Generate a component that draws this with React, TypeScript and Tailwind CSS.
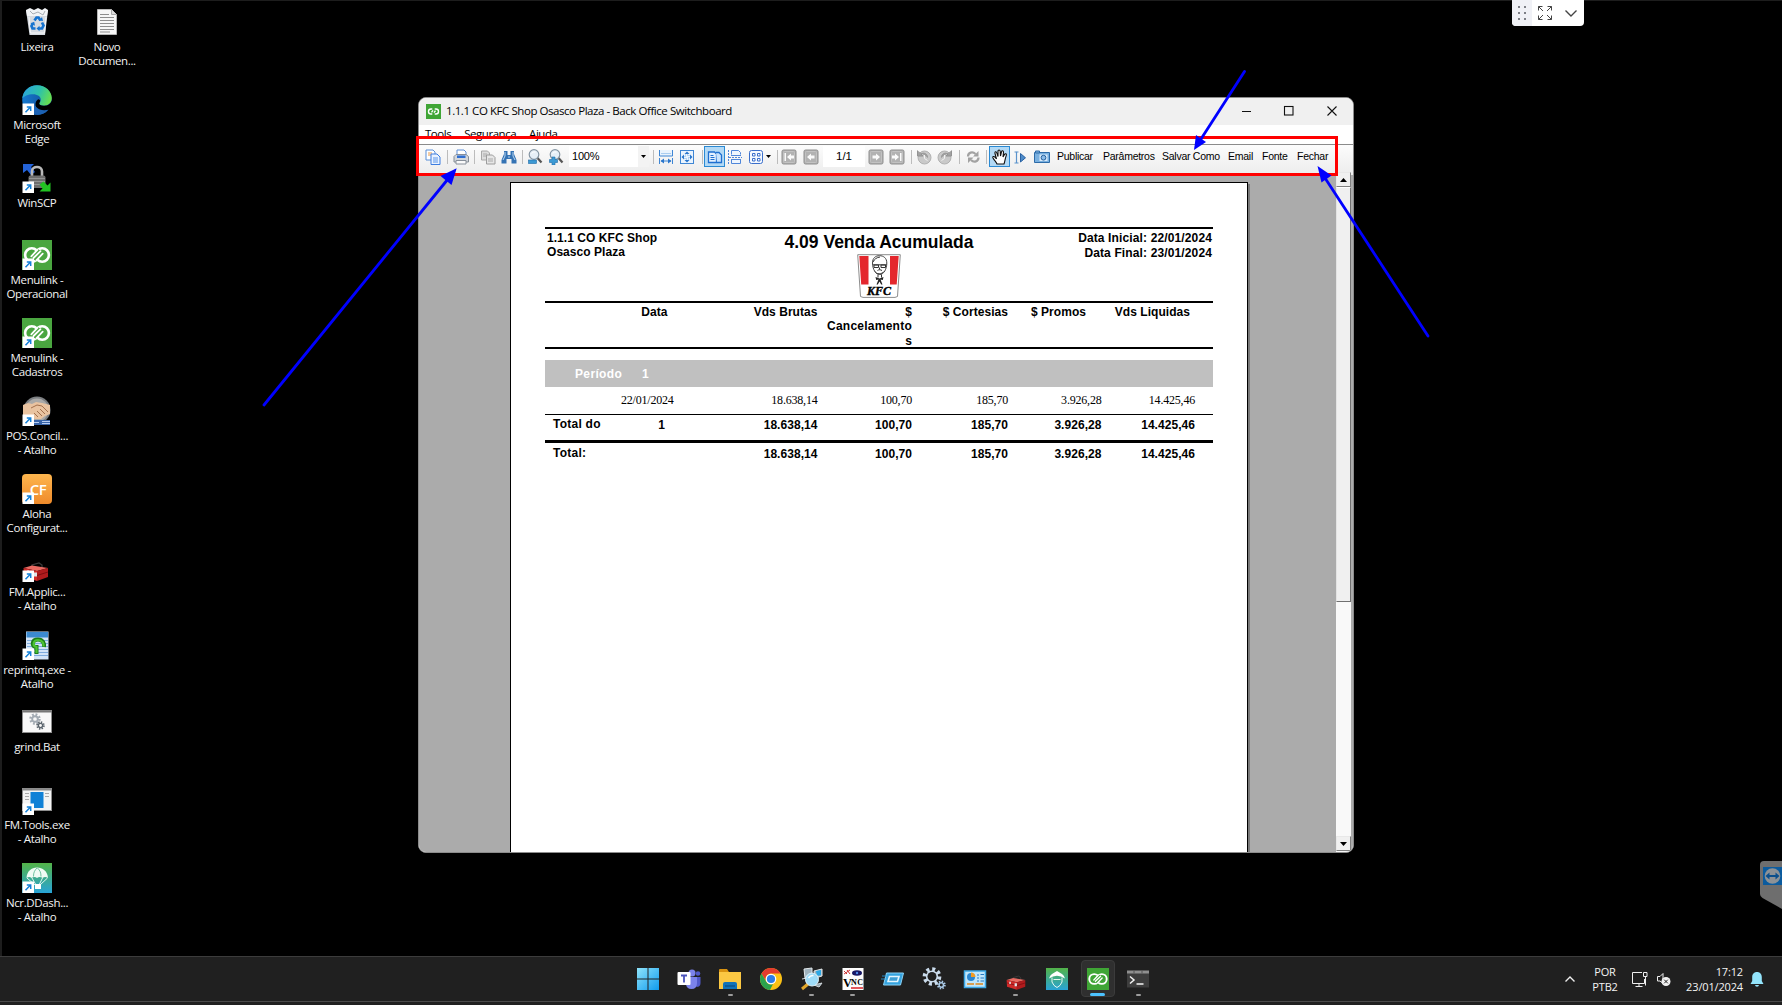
import React from "react";

function ShortcutBadge() {
  return (
    <g>
      <rect x="0.5" y="18.5" width="11.5" height="11.5" fill="#fff" />
      <path d="M3.5 27.3 8.3 22.2M4.8 21.9h3.9v4" fill="none" stroke="#1380d8" strokeWidth="1.5" />
    </g>
  );
}

function LinkRings({ ground }: { ground: string }) {
  return (
    <g fill="none" strokeLinecap="round">
      <circle cx="9.800" cy="15" r="6.700" stroke="#fff" strokeWidth="2.600" />
      <circle cx="20.200" cy="15" r="6.700" stroke="#fff" strokeWidth="2.600" />
      <path d="M11.500 19 18.500 11" stroke={ground} strokeWidth="7" strokeLinecap="butt" />
      <path d="M9.300 16.300 15.600 9.600M11.500 18 18.500 11.200M14.300 20.300 20.700 13.600" stroke="#fff" strokeWidth="1.800" />
    </g>
  );
}

function TrashIcon() {
  return (
    <svg width="30" height="30" viewBox="0 0 30 30">
      <path d="M4 3h22l-3 25H7.500z" fill="#d5dae0" />
      <path d="M4 3 8 1l4 2 4-2 4 2 3-2 3 2-1 6H5z" fill="#f2f4f6" />
      <path d="M8 4l3 3 5-2 5 3 2-4" stroke="#a8aeb5" fill="none" />
      <path d="m7 10 1.500 16h14L24 10" stroke="#f6f7f8" fill="none" />
      <g fill="none" stroke="#1673cf" strokeWidth="2.700">
        <path d="m12.500 13.500 2-3h2l2 3M20 15.500l1.500 3-1.500 3h-3M13.500 21.500h-3L9.500 19l1.500-3" />
      </g>
      <path d="m17 13.500 4 .5-1-4zM17.500 18.800v5.400l-3-2.700zM8.500 16.500l3.700-1.800.8 4z" fill="#1673cf" />
    </svg>
  );
}
function DocIcon() {
  return (
    <svg width="30" height="30" viewBox="0 0 30 30">
      <path d="M5.500 2.500h14l5 5v20h-19z" fill="#f6f6f6" stroke="#b5b5b5" />
      <path d="M19.500 2.500v5h5" fill="#ddd" stroke="#aaa" />
      <path d="M8 7.500h9M8 10.500h14M8 13.500h14M8 16.500h14M8 19.500h14M8 22.500h14M8 25h10" stroke="#8d8d8d" />
    </svg>
  );
}
function EdgeIcon() {
  return (
    <svg width="30" height="30" viewBox="0 0 30 30">
      <defs>
        <linearGradient id="eg1" x1="0" x2="1" y1="0.300" y2="0.600">
          <stop offset="0" stopColor="#2aa4dc" />
          <stop offset="0.550" stopColor="#2fc2a8" />
          <stop offset="1" stopColor="#6ae04b" />
        </linearGradient>
        <linearGradient id="eg2" x1="0" x2="1">
          <stop offset="0" stopColor="#1579cf" />
          <stop offset="1" stopColor="#134b94" />
        </linearGradient>
      </defs>
      <circle cx="15" cy="15" r="14.800" fill="url(#eg2)" />
      <path d="M.3 13.500C1 5.500 7.500.2 15 .2c8.500 0 14.800 6 14.800 12.800 0 5-3.800 7.700-7.800 7.700-3.500 0-4.800-1.200-4.800-2.200 0-.8 1.600-1.500 1.600-4 0-3-3.300-5.300-7.800-5.300C6 9.200 1.800 11.200.3 13.500z" fill="url(#eg1)" />
      <path d="M17.200 18.500c0 1 1.300 2.200 4.800 2.200 4 0 6.500-2 8-5v9l-4 2c-6 1.500-12-2-12.500-6.500-.3-3 1-5 2.700-6 1.300 0 2.400 1 1.900 2z" fill="#000" />
      <path d="M12 13.500c-1.500 7 4 13.500 14.500 11.200C22 30 15 31.500 9 28z" fill="#1c62b4" />
      <ShortcutBadge />
    </svg>
  );
}
function WinScpIcon() {
  return (
    <svg width="30" height="30" viewBox="0 0 30 30">
      <path d="M1 1h11L9 4l4 5-4 3-4-5-4 3z" fill="#2463d8" />
      <path d="M10 14V8.500c0-6 10-6 10 0V14" fill="none" stroke="#b9b9b9" strokeWidth="2.600" />
      <rect x="6.500" y="12.500" width="17" height="12.500" rx="2" fill="#6e6e6e" />
      <path d="M7 15.500h16M7 18.500h16M7 21.500h16" stroke="#949494" />
      <path d="M28.500 28.500h-11l3-3-3-4 4-3 4 4 3-3z" fill="#22c322" />
      <ShortcutBadge />
    </svg>
  );
}
function MenulinkIcon() {
  return (
    <svg width="30" height="30" viewBox="0 0 30 30">
      <rect width="30" height="30" fill="#4aa640" />
      <LinkRings ground="#4aa640" />
      <ShortcutBadge />
    </svg>
  );
}
function HandshakeIcon() {
  return (
    <svg width="30" height="30" viewBox="0 0 30 30">
      <circle cx="15" cy="14" r="13.500" fill="#7c7f82" />
      <circle cx="15" cy="14" r="11.500" fill="#a9a9a8" />
      <path d="M1 9c4-2 6-2 9-1l4-2 6 1 8 2v9l-5 2-4 3h-6l-6-3-6-1z" fill="#e9c3a0" />
      <path d="M9 12l6-3 5 1 6 6M12 17l4 4M15 15l5 5M18 13l5 5" stroke="#a4714d" fill="none" />
      <path d="M12 24h16v5H12z" fill="#3864a8" />
      <path d="M12 26.500h5M20 25.500h8M20 27.500h8" stroke="#b7cdf0" />
      <ShortcutBadge />
    </svg>
  );
}
function CfIcon() {
  return (
    <span className="relative block h-[30px] w-[30px] rounded-sm bg-gradient-to-b from-[#fdb64e] to-[#ef8a2a]">
      <span className="block pl-[2px] pt-[5px] text-center font-['Open_Sans',sans-serif] text-[15px] leading-[20px] font-semibold tracking-[-0.500px] text-white">CF</span>
      <svg className="absolute inset-0" width="30" height="30" viewBox="0 0 30 30">
        <ShortcutBadge />
      </svg>
    </span>
  );
}
function ToolboxShape() {
  return (
    <g>
      <path d="M10 13v-3l7-2 3 2v3" fill="none" stroke="#3a3a3a" strokeWidth="1.300" />
      <path d="M1.500 13 10 10.500 26 13l-11 3z" fill="#e86a62" />
      <path d="M1.500 13 15 16v10L2 22z" fill="#d02a29" />
      <path d="M15 16l11-3v9l-11 4z" fill="#b01b1d" />
      <path d="M2 17l13 3.500L26 17" stroke="#7d0d10" fill="none" />
      <path d="M12 17.500h3v4h-3zM5 15.500h2v3H5z" fill="#dfe6ea" />
    </g>
  );
}
function ToolboxIcon() {
  return (
    <svg width="30" height="30" viewBox="0 0 30 30">
      <g transform="translate(0 3)">
        <ToolboxShape />
      </g>
      <ShortcutBadge />
    </svg>
  );
}
function ReprintIcon() {
  return (
    <svg width="30" height="30" viewBox="0 0 30 30">
      <rect x="4" y="1.500" width="22.500" height="28" fill="#d3e4f7" />
      <rect x="4.500" y="2" width="21.500" height="5.500" fill="#3c8ad0" />
      <path d="M5 10.500h21M5 13.500h21M5 16.500h21M5 19.500h21M5 22.500h21M5 25.500h21" stroke="#7fabdd" />
      <path d="M14.500 24v-7C9 17 9.500 9.500 16 9.500c5 0 6.500 4 6 7.500" fill="none" stroke="#1d7d17" strokeWidth="4" />
      <path d="M14.500 23v-6C10 16 11 10 16 10c4.500 0 6 3.500 5.500 6.500" fill="none" stroke="#4cc234" strokeWidth="2.200" />
      <ShortcutBadge />
    </svg>
  );
}
function Gear({ cx, cy, r, color, hole }: { cx: number; cy: number; r: number; color: string; hole: string }) {
  return (
    <g>
      <circle cx={cx} cy={cy} r={r} fill="none" stroke={color} strokeWidth={r * 0.6} strokeDasharray={`${r * 0.4} ${r * 0.385}`} />
      <circle cx={cx} cy={cy} r={r * 0.85} fill={color} />
      <circle cx={cx} cy={cy} r={r * 0.42} fill={hole} />
    </g>
  );
}
function BatIcon() {
  return (
    <svg width="30" height="30" viewBox="0 0 30 30">
      <rect x="0.500" y="3.500" width="29" height="22" fill="#f8f8f8" stroke="#8e8e8e" />
      <path d="M0 4.500h30" stroke="#777" strokeWidth="2" />
      <Gear cx={13} cy={12} r={4.4} color="#a3abb3" hole="#f8f8f8" />
      <Gear cx={18.5} cy={18.5} r={3.3} color="#5b656d" hole="#f8f8f8" />
    </svg>
  );
}
function ExeIcon() {
  return (
    <svg width="30" height="30" viewBox="0 0 30 30">
      <rect x="0.500" y="3.500" width="29" height="22" fill="#f4f4f4" stroke="#8e8e8e" />
      <path d="M0 4.500h30" stroke="#888" strokeWidth="2" />
      <path d="M3 8.500h4M3 11.500h4M3 14.500h4M23 8.500h4M23 11.500h4" stroke="#aaa" />
      <rect x="8.500" y="7" width="13" height="16" fill="#1181d6" />
      <ShortcutBadge />
    </svg>
  );
}
function ParachuteIcon() {
  return (
    <svg width="30" height="30" viewBox="0 0 30 30">
      <defs>
        <linearGradient id="pg" x1="0" x2="0" y1="0" y2="1">
          <stop offset="0" stopColor="#53b348" />
          <stop offset="1" stopColor="#28a3d6" />
        </linearGradient>
      </defs>
      <rect width="30" height="30" fill="url(#pg)" />
      <path d="M4.500 15C5 8 9.500 4.500 15 4.500S25.500 8 26 15c-2-1.500-4-1.500-5.300 0-2-1.500-4-1.500-5.700 0-1.500-1.500-3.500-1.500-5.500 0-1.300-1.500-3-1.500-5 0z" fill="#f0fbf4" />
      <path d="M5 15l8 7M25.500 15 18 22M10 15l4 7M20.500 15 17 22" stroke="#e4f6ee" fill="none" />
      <path d="M11.500 13.500c0-4 1-6 3.500-8.500M19 13.500c0-4-1-6-3.500-8.500" stroke="#4db48a" fill="none" strokeWidth=".8" />
      <rect x="13" y="21" width="6" height="5" fill="#fff" />
      <ShortcutBadge />
    </svg>
  );
}

function DesktopItem({ icon, lines }: { icon: React.ReactNode; lines: string[] }) {
  return (
    <div className="flex h-[77.820px] w-[70px] flex-col items-center">
      <div className="h-[30px] w-[30px]">{icon}</div>
      <div className="mt-[3px] whitespace-nowrap text-center text-[11.500px] leading-[14px] tracking-[-0.360px] text-[#f2f2f2]">
        {lines.map((l) => (
          <div key={l} className="flex justify-center">{l}</div>
        ))}
      </div>
    </div>
  );
}

/* ---------- report viewer toolbar ---------- */

function Cell({ children, active = false }: { children?: React.ReactNode; active?: boolean }) {
  return (
    <div
      className={
        active
          ? "flex h-[21px] items-center justify-center border border-[#2a8ad4] bg-[#b3d9f5]"
          : "flex h-[21px] items-center justify-center"
      }
    >
      {children}
    </div>
  );
}
function Sep() {
  return (
    <div className="flex h-[21px] items-center justify-center">
      <div className="h-[14px] w-px shrink-0 bg-[#bcbcbc]" />
    </div>
  );
}
function Ico({ children }: { children: React.ReactNode }) {
  return (
    <svg className="shrink-0" width="16" height="16" viewBox="0 0 16 16" fill="none">
      {children}
    </svg>
  );
}
function NavIcon({ d }: { d: string }) {
  return (
    <Ico>
      <rect x="1" y="1" width="14" height="14" rx="1.500" fill="#b2b2b2" stroke="#8f8f8f" />
      <rect x="2.500" y="2.500" width="11" height="11" rx="1" stroke="#c2c2c2" />
      <path d={d} fill="#fafafa" />
    </Ico>
  );
}
function Lens({ plus = false }: { plus?: boolean }) {
  return (
    <Ico>
      <path d="m10.500 9 4 4.500" stroke="#555" strokeWidth="2.200" />
      <circle cx="7" cy="5.500" r="4.800" fill="#e6eff7" stroke="#8696a4" strokeWidth="1.200" />
      <path d="M4.500 4.500q1.500-2 4-1.500" stroke="#fff" />
      {plus ? (
        <path d="M4 8h3v2.500h2.500v3H7V16H4v-2.500H1.500v-3H4z" fill="#3d9ad4" stroke="#1f6ca8" strokeWidth=".6" />
      ) : (
        <rect x="1.500" y="11" width="8" height="3.500" fill="#3d9ad4" stroke="#1f6ca8" strokeWidth=".6" />
      )}
    </Ico>
  );
}

function Toolbar() {
  return (
    <div className="grid h-[31px] shrink-0 grid-cols-[22px_7px_19px_9px_17px_25px_3px_22px_20px_3px_80px_9px_16px_26px_4px_21px_20px_21px_5px_12px_12px_3px_25px_42px_22px_20px_9px_15px_28px_1px_25px_3px_1px_21px_20px_23px_4px_46px_59px_66px_34px_35px_1fr] border-t border-[#8b8b8b] bg-gradient-to-b from-[#fcfcfc] to-[#ececec] pl-[3px] pt-[1px] font-['Liberation_Sans',sans-serif] text-[11px] text-black">
      <Cell>
        <Ico>
          <path d="M1 1h7l2 2v8H1z" fill="#fff" stroke="#5a8fd8" />
          <path d="M3 4h4M3 6h4" stroke="#e89a4a" />
          <path d="M6 5h6l3 3v7.500H6z" fill="#eaf3ff" stroke="#3d7de0" />
          <path d="M8 9h5M8 11h5M8 13h5" stroke="#5a95ea" />
        </Ico>
      </Cell>
      <Sep />
      <Cell>
        <Ico>
          <path d="M4 6V1h7l2 2v3" fill="#fff" stroke="#5f8fd6" />
          <path d="M1 7.500 3 5.500h10l2.500 2V13H1z" fill="#d3d7dc" stroke="#868e97" />
          <path d="M4 6.500h8.500v2.500H4z" fill="#2f6fd1" />
          <path d="M3 11.500h10V15H3z" fill="#fafafa" stroke="#88909a" />
        </Ico>
      </Cell>
      <Sep />
      <Cell>
        <Ico>
          <path d="M1.500 2h6l2 2v7h-8z" fill="#ddd" stroke="#a8a8a8" />
          <path d="M6.500 6h6l2.500 2.500V15H6.500z" fill="#e6e6e6" stroke="#9c9c9c" />
          <path d="M3 5h4M3 7h3M8 10h5M8 12h5" stroke="#aaa" />
        </Ico>
      </Cell>
      <Cell>
        <Ico>
          <path d="M3 2h3.500v4h3V2H13v3l2.500 6v3.500h-5V10h-5v4.500h-5V11L3 5z" fill="#3573b4" />
          <path d="M4 3v4l-2 4M12 3v4l2 4M7 8h2" stroke="#b9d6f0" />
        </Ico>
      </Cell>
      <Sep />
      <Cell><Lens /></Cell>
      <Cell><Lens plus /></Cell>
      <div />
      <div className="flex h-[21px] items-center justify-between bg-white pl-[3px]">
        <span className="tracking-[-0.200px]">100%</span>
        <span className="flex h-full w-[11px] items-center justify-center bg-[#f3f3f3]">
          <svg width="5" height="3" viewBox="0 0 5 3"><path d="M0 0h5L2.500 3z" fill="#000" /></svg>
        </span>
      </div>
      <Sep />
      <Cell>
        <Ico>
          <path d="M1.500 1v6h13V1" stroke="#3f86d4" fill="#e9f3fd" />
          <path d="M1.500 9v6M14.500 9v6M3 12h10" stroke="#3f86d4" />
          <path d="m6 9.500-3.500 2.500L6 14.500zM10 9.500l3.500 2.500-3.500 2.500z" fill="#2a76cc" />
          <path d="M3 4.500h10" stroke="#a9cdf0" />
        </Ico>
      </Cell>
      <Cell>
        <Ico>
          <rect x="1.500" y="1.500" width="13" height="13" fill="#eaf4fe" stroke="#3f86d4" />
          <path d="m8 2.500 2.500 2.500h-5zM8 13.500l2.500-2.500h-5zM2.500 8 5 5.500v5zM13.500 8 11 5.500v5z" fill="#2a76cc" />
          <path d="M6 6h4v4H6z" stroke="#7fb2e6" strokeDasharray="1 1" />
        </Ico>
      </Cell>
      <Sep />
      <Cell active>
        <Ico>
          <path d="M1.500 3h6l2 2v8.500h-8z" fill="#e4f1ff" stroke="#1f6fd0" strokeWidth="1.300" />
          <path d="M9 3.500h3l2.500 2.500v7.500H10" fill="#cbe4fd" stroke="#1f6fd0" strokeWidth="1.300" />
          <path d="M3.500 6.500h3M3.500 8.500h4M3.500 10.500h4" stroke="#1f6fd0" />
        </Ico>
      </Cell>
      <Cell>
        <Ico>
          <path d="M4.500 5.500v-4h7l2 2v2M4.500 11v3.500h9V11" fill="#edf5ff" stroke="#4f86da" />
          <path d="M1.500 1v14" stroke="#4f86da" strokeDasharray="2 1" />
          <path d="M2 8.500h13" stroke="#4f86da" strokeDasharray="2 1" />
          <path d="M4 6.500h10M4 10.500h10" stroke="#4f86da" />
        </Ico>
      </Cell>
      <Cell>
        <Ico>
          <rect x="1.500" y="1.500" width="13" height="13" rx="2" fill="#f3f8ff" stroke="#3b6fcb" />
          <path d="M4.500 4.500h2.500v2.500H4.500zM9.500 4.500H12v2.500H9.500zM4.500 9.500h2.500V12H4.500zM9.500 9.500H12V12H9.500z" fill="#fff" stroke="#3b6fcb" />
        </Ico>
      </Cell>
      <Cell>
        <svg className="shrink-0" width="5" height="3" viewBox="0 0 5 3"><path d="M0 0h5L2.500 3z" fill="#000" /></svg>
      </Cell>
      <Sep />
      <Cell><NavIcon d="M3.500 4h1.500v8H3.500zM6 8l4-3.500v2h3v3h-3v2z" /></Cell>
      <div />
      <Cell><NavIcon d="M4 8 8 4.500v2h3.500v3H8v2z" /></Cell>
      <div className="flex h-[21px] items-center justify-center bg-white text-[11.500px]">1/1</div>
      <Cell><NavIcon d="M12 8 8 4.500v2H4.500v3H8v2z" /></Cell>
      <Cell><NavIcon d="M12.500 4H11v8h1.500zM10 8 6 4.500v2H3v3h3v2z" /></Cell>
      <Sep />
      <Cell>
        <Ico>
          <circle cx="8.500" cy="8.500" r="6.500" fill="#c9c9c9" stroke="#b0b0b0" />
          <path d="M1.500 1.500v5.500H7L5 5C8 3 11.500 5 11.500 8.500" fill="#a2a2a2" stroke="#929292" />
          <path d="M8.500 6v3.500l3 2" stroke="#f2f2f2" />
        </Ico>
      </Cell>
      <Cell>
        <Ico>
          <circle cx="7.500" cy="8.500" r="6.500" fill="#c9c9c9" stroke="#b0b0b0" />
          <path d="M14.500 1.500v5.500H9l2-2C8 3 4.500 5 4.500 8.500" fill="#a2a2a2" stroke="#929292" />
          <path d="M7.500 6v3.500l-3 2" stroke="#f2f2f2" />
        </Ico>
      </Cell>
      <Sep />
      <Cell>
        <Ico>
          <path d="M3 7.500c0-4 4.500-5.500 7.500-2.500M13.500 8.500c0 4-4.500 5.500-7.500 2.500" stroke="#a2a2a2" strokeWidth="2.200" />
          <path d="M13.500 2v5.500H8zM3 14V8.500h5.500z" fill="#a2a2a2" />
        </Ico>
      </Cell>
      <Sep />
      <div />
      <Cell active>
        <Ico>
          <path d="M5 15c-.5-2-3-4-4-6-.8-1.700 1-2 2-.8L4.500 10 3 4.500c-.5-2 1.300-2.300 1.800-.6L6 7.500V2.300C6 .5 8 .5 8.200 2.300L8.500 7l1-4.200c.4-1.600 2.200-1.200 2 .5L11 8l1.500-2.600c.8-1.300 2.300-.6 1.800.9C13 10 13 12 12 15z" fill="#fff" stroke="#111" strokeWidth="1.100" />
        </Ico>
      </Cell>
      <Cell>
        <Ico>
          <path d="M4.500 3.500v10M2.500 3H4l.5.500L5 3h1.500M2.500 14H4l.5-.5.5.5h1.500" stroke="#5b93cc" strokeWidth="1.200" />
          <path d="m8.500 4.500 5 4.300-5 4.200z" fill="#4d8cca" stroke="#2a62a3" />
        </Ico>
      </Cell>
      <Cell>
        <Ico>
          <path d="M.5 3.500h15v10H.5z" fill="#79b0e0" stroke="#2d6ba8" />
          <path d="M1.500 2h4v2h-4z" fill="#7fb1df" stroke="#2d6ba8" />
          <path d="M5.500 5.500h8v6.500h-8z" fill="#d8eafa" />
          <circle cx="9.500" cy="8.700" r="2.400" fill="#8abbe8" stroke="#245f9d" />
        </Ico>
      </Cell>
      <div />
      {["Publicar", "Parâmetros", "Salvar Como", "Email", "Fonte", "Fechar"].map((t) => (
        <div key={t} className="flex h-[21px] items-center whitespace-nowrap text-[10.500px] tracking-[-0.260px]">{t}</div>
      ))}
    </div>
  );
}

/* ---------- report ---------- */

function KfcLogo() {
  return (
    <div className="relative h-[44px] w-[44px]">
      <svg width="44" height="44" viewBox="0 0 44 44">
        <path d="M.7.700h42.600L40.500 42.500 38 43.400H6L3.500 42.500z" fill="#fff" stroke="#8c8c8c" />
        <path d="M2.300 2h9.200v28.500H4.200zM33 2h8.700l-2 28.500H33z" fill="#e4272d" />
        <path d="M15.500 9c0-5 3-7.300 7-7.300s7.300 2.300 7.300 7.300c0 6-3 11.500-7.100 11.500S15.500 15 15.500 9z" fill="#fff" stroke="#444" />
        <path d="M16 8c1.500-3 3.500-4.500 7-5M17 11h4.500v2.500H17zM24 11h4.500v2.500H24zM16 10.800h13.500M20.500 16.500c1-1 3-1 4.500 0M18 17.500c1 3 7 3 9 0M22.500 13.500v2M21 20.500v3M24.500 20.500v3" fill="none" stroke="#333" />
        <path d="m18.500 23 4 1.500 4-1.500-.7 3-2.300-.5 2 5h-1.300l-1.700-3-1.700 3h-1.300l2-5-2.300.5z" fill="#222" />
      </svg>
      <span className="absolute left-[8px] top-[31px] inline-block w-[28px] text-center font-['Liberation_Serif',serif] text-[12px] font-black italic leading-[12px] text-black [-webkit-text-stroke:0.400px_black]">KFC</span>
    </div>
  );
}

const gridRow =
  "grid grid-cols-[76px_53px_143.500px_94.500px_96px_93.500px_93.500px] whitespace-nowrap";

function Total({ label, n, top }: { label: string; n?: string; top: string }) {
  return (
    <div className={`${gridRow} ${top} text-[12px] font-bold leading-[14px] tracking-[0.050px]`}>
      <div className="-mt-px pl-[8px] tracking-[0.250px]">{label}</div>
      <div className="flex justify-end pr-[9px]">{n}</div>
      {["18.638,14", "100,70", "185,70", "3.926,28", "14.425,46"].map((v) => (
        <div key={v} className="text-right">{v}</div>
      ))}
    </div>
  );
}

function Report() {
  return (
    <div className="ml-[91px] mt-[7px] flex h-[671px] w-[738px] shrink-0 flex-col border-l border-r border-t border-black bg-white pl-[34px] pt-[44px] font-['Liberation_Sans',sans-serif] text-black shadow-[2px_2px_0_#7a7a7a]">
      <div className="flex h-[76px] w-[668px] justify-between border-b-2 border-t-2 border-black text-[12px] font-bold leading-[14.500px] tracking-[0.050px]">
        <div className="w-[240px] pl-[2px] pt-[1.500px]">
          1.1.1 CO KFC Shop
          <br />
          Osasco Plaza
        </div>
        <div className="flex flex-col items-center pt-[3px]">
          <div className="whitespace-nowrap text-[17.500px] leading-[20px] tracking-[0px]">4.09 Venda Acumulada</div>
          <div className="mt-[2px]"><KfcLogo /></div>
        </div>
        <div className="w-[240px] pr-px pt-[2px] text-right tracking-[0.130px]">
          Data Inicial: 22/01/2024
          <br />
          Data Final: 23/01/2024
        </div>
      </div>
      <div className="grid h-[46px] w-[668px] grid-cols-[122.500px_150px_94.500px_96px_78px_104px] border-b-2 border-black pt-[1.500px] text-right text-[12px] font-bold leading-[14.500px] tracking-[0.050px]">
        <div>Data</div>
        <div>Vds Brutas</div>
        <div>$<br /><span className="tracking-[0.250px]">Cancelamento</span><br />s</div>
        <div>$ Cortesias</div>
        <div>$ Promos</div>
        <div>Vds Liquidas</div>
      </div>
      <div className="mt-[11px] flex h-[27px] w-[668px] shrink-0 items-center bg-[#c0c0c0] text-[12px] font-bold text-white">
        <div className="w-[97px] pl-[30px] pt-px tracking-[0.350px]">Período</div>
        <div>1</div>
      </div>
      <div className={`${gridRow} h-[28px] w-[668px] border-b border-black pt-[6px] font-['Liberation_Serif',serif] text-[12px] leading-[14px] tracking-[-0.200px]`}>
        <div />
        <div>22/01/2024</div>
        {["18.638,14", "100,70", "185,70", "3.926,28", "14.425,46"].map((v) => (
          <div key={v} className="text-right">{v}</div>
        ))}
      </div>
      <div className="h-[28px] w-[668px] border-b-[3px] border-black">
        <Total label="Total do" n="1" top="pt-[3px]" />
      </div>
      <Total label="Total:" top="pt-[4px]" />
    </div>
  );
}

function ScrollButton({ up = false }: { up?: boolean }) {
  return (
    <div className="flex h-[15px] w-[15px] shrink-0 items-center justify-center border border-b-[#808080] border-l-[#e8e8e8] border-r-[#808080] border-t-[#e8e8e8] bg-[#f0f0f0]">
      <svg width="7" height="4" viewBox="0 0 7 4"><path d={up ? "M0 4h7L3.500 0z" : "M0 0h7L3.500 4z"} fill="#000" /></svg>
    </div>
  );
}

function BackOfficeWindow() {
  return (
    <div className="absolute left-[418px] top-[97px] flex h-[756px] w-[936px] flex-col overflow-hidden rounded-[8px] border border-[#8c8c8c] bg-white font-['Open_Sans',sans-serif]">
      <div className="flex h-[27px] shrink-0 items-center bg-[#f0f0f0] pb-[2px] pl-[7px] text-[11.500px] text-black">
        <svg className="mt-[1px]" width="15" height="15" viewBox="0 0 15 15">
          <rect width="15" height="15" fill="#3fa535" />
          <path d="M6.300 10H5a2.500 2.500 0 0 1 0-5h1.300M8.700 5H10a2.500 2.500 0 0 1 0 5H8.700M5.500 8.300 7 6.300M8 8.700l1.500-2" fill="none" stroke="#fff" strokeWidth="1.400" />
        </svg>
        <span className="ml-[5px] whitespace-nowrap tracking-[-0.440px]">1.1.1 CO KFC Shop Osasco Plaza - Back Office Switchboard</span>
        <svg className="ml-auto mr-[16px]" width="96" height="12" viewBox="0 0 96 12" fill="none" stroke="#111" strokeWidth="1.100">
          <path d="M1 6.500h9M86.500 1.500l9 9M95.500 1.500l-9 9" />
          <rect x="43.500" y="1.500" width="8.500" height="8.500" />
        </svg>
      </div>
      <div className="flex h-[19px] shrink-0 items-start gap-[13px] overflow-hidden bg-white pl-[6px] pt-[1px] text-[11.500px] leading-[16px] tracking-[-0.470px] text-black">
        <span>Tools</span>
        <span>Segurança</span>
        <span>Ajuda</span>
      </div>
      <Toolbar />
      <div className="flex min-h-0 flex-1 bg-[#ababab]">
        <div className="min-w-0 flex-1 overflow-hidden"><Report /></div>
        <div className="-mt-[3px] mr-[2px] flex w-[15px] flex-col bg-[#f9f9f9]">
          <ScrollButton up />
          <div className="h-[415px] border border-b-[#707070] border-l-[#e3e3e3] border-r-[#707070] border-t-[#fff] bg-[#f0f0f0]" />
          <div className="flex-1" />
          <ScrollButton />
          <div className="h-px" />
        </div>
      </div>
    </div>
  );
}

/* ---------- taskbar ---------- */

function Task({ children, running = false, active = false }: { children: React.ReactNode; running?: boolean; active?: boolean }) {
  return (
    <div className="flex w-[40.830px] flex-col items-center">
      <div className={active ? "flex h-[37px] w-[34px] flex-col items-center rounded-[4px] border border-[#3b3b3b] bg-[#2f2f2f]" : "flex h-[37px] w-[34px] flex-col items-center border border-transparent"}>
        <svg className="mt-[7px] overflow-visible" width="22" height="22" viewBox="0 0 22 22">{children}</svg>
        <div className={active ? "mt-[3px] h-[3px] w-[15px] rounded-full bg-[#4cc2ff]" : running ? "mt-[4px] h-[2.500px] w-[5px] rounded-full bg-[#9c9c9c]" : "h-0"} />
      </div>
    </div>
  );
}

function Taskbar() {
  return (
    <div className="absolute bottom-0 left-0 flex h-[49px] w-full border-t border-[#3c3c3c] bg-[#202020]">
      <div className="flex pl-[628px] pt-[3px]">
        <Task>
          <defs>
            <linearGradient id="wg" x1="0" x2="1" y1="0" y2="1">
              <stop offset="0" stopColor="#8fe4fb" />
              <stop offset="1" stopColor="#0f9bee" />
            </linearGradient>
          </defs>
          <path d="M0 0h10.500v10.500H0zM11.500 0H22v10.500H11.500zM0 11.500h10.500V22H0zM11.500 11.500H22V22H11.500z" fill="url(#wg)" />
        </Task>
        <Task>
          <circle cx="14" cy="5" r="3.500" fill="#7b83eb" />
          <circle cx="20" cy="5.500" r="2.300" fill="#5059c9" />
          <path d="M16 9h6.500v6q0 4-4 4z" fill="#5059c9" />
          <path d="M8 9h11v6q0 6-5.500 6T8 15z" fill="#7b83eb" />
          <rect x="-0.500" y="4" width="13" height="13" rx="1" fill="#fff" />
          <path d="M3 7.500h6M6 7.500v7" stroke="#4b53bc" strokeWidth="1.800" />
        </Task>
        <Task running>
          <path d="M0 2q0-1 1-1h7l2 3H0z" fill="#d99310" />
          <path d="M0 4h22v17H0z" fill="#fbc843" />
          <path d="M4 21v-5q0-2 2-2h10q2 0 2 2v5z" fill="#1272b8" />
          <path d="M6 18h10" stroke="#0d548c" strokeWidth="1.500" />
        </Task>
        <Task>
          <circle cx="11" cy="11" r="11" fill="#fbc116" />
          <path d="M11 0A11 11 0 0 1 20.500 5.500H11a5.500 5.500 0 0 0-4.800 8.200L1.500 5.500A11 11 0 0 1 11 0z" fill="#e33b2e" />
          <path d="M1.500 5.500 6.200 13.700A5.500 5.500 0 0 0 13 16L10 22A11 11 0 0 1 1.500 5.500z" fill="#2ba24c" />
          <circle cx="11" cy="11" r="5.300" fill="#fff" />
          <circle cx="11" cy="11" r="4.100" fill="#2d7de8" />
        </Task>
        <Task running>
          <path d="M3 1l8-1v8l-7 2zM13 3l8-2v7l-7 2z" fill="#9fb2bd" stroke="#e2e8eb" />
          <path d="M15 3l5-1v5l-4 1z" fill="#2aa7e6" />
          <path d="m13 17 8-2-3 4zM1 11l5-1" stroke="#d3dade" fill="#8fa1ab" />
          <path d="M7 16 1 21" stroke="#e0a62b" strokeWidth="3" />
          <circle cx="11" cy="11.500" r="6.500" fill="#9fdcf8" stroke="#dff3fc" />
          <path d="M7.500 10q2-3 5-2.500" stroke="#fff" fill="none" strokeWidth="1.500" />
        </Task>
        <Task running>
          <rect x="0.500" width="21" height="22" fill="#fdfdfd" />
          <path d="M2 3l3 3M5 2l3 4M2 6l6-4" stroke="#c33" />
          <ellipse cx="15" cy="5" rx="5" ry="2.800" fill="#171764" />
          <circle cx="15" cy="5" r="1.200" fill="#4c8ae8" />
          <text x="1" y="18.500" fontSize="12.500" fontWeight="bold" fontFamily="Liberation Serif, serif" fill="#000">V</text>
          <text x="9" y="17" fontSize="8" fontWeight="bold" fontFamily="Liberation Serif, serif" fill="#000" textLength="12">NC</text>
          <path d="M9 20h12" stroke="#d8232a" strokeWidth="1.500" />
        </Task>
        <Task>
          <path d="M4.500 5h17l-3 12H1.500z" fill="#35a3df" stroke="#8bd3f7" />
          <path d="M7.500 8.500h9.500l-1.500 5H6z" fill="#3f9fd4" stroke="#e3f6ff" strokeWidth="1.600" />
          <path d="M0 8h4M-1 11h4" stroke="#2587c2" />
        </Task>
        <Task>
          <Gear cx={9} cy={8.5} r={7.2} color="#cbdcec" hole="#202020" />
          <circle cx="9" cy="8.500" r="4.500" fill="#202020" />
          <Gear cx={18.3} cy={17} r={3.4} color="#a9c9e6" hole="#202020" />
        </Task>
        <Task>
          <rect x="0.500" y="3" width="21" height="16.500" fill="#bfe6fb" stroke="#3ba7e5" strokeWidth="1.500" />
          <circle cx="7" cy="9" r="4" fill="#2a86d1" />
          <path d="M7 9V4.500A4.500 4.500 0 0 1 11.500 9z" fill="#f39b20" />
          <path d="M3 16h7M11.500 16H19" stroke="#e0861b" strokeWidth="1.500" />
          <path d="M13 7h2M13 10h2M13 13h2M16.500 6.500H20M16.500 10H20M16.500 13H20" stroke="#2779c4" />
        </Task>
        <Task running>
          <g transform="translate(0.500 2) scale(.76)"><ToolboxShape /></g>
        </Task>
        <Task>
          <rect width="22" height="22" fill="url(#pg)" />
          <path d="M3 10.500Q4 7 6 6l5-3 5 3q2 1 3 4.500Q15 7.800 11 7.800T3 10.500z" fill="#fff" />
          <path d="M6 9.500V14q1.500 4 5 5.500 3.500-1.500 5-5.500V9.500M7.500 11.500h7" stroke="#e7f8f0" fill="none" />
        </Task>
        <Task active>
          <rect width="22" height="22" fill="#3fa535" />
          <g transform="scale(.733)"><LinkRings ground="#3fa535" /></g>
        </Task>
        <Task running>
          <path d="M0 3h22v16.500H0z" fill="#3d3d3d" />
          <path d="M0 2.500h22v3H0z" fill="#8f8f8f" />
          <path d="M7 2.500v3M15 2.500v3" stroke="#555" />
          <path d="m3 8.500 4 3.500-4 3.500M9.500 16h7" stroke="#f3f3f3" strokeWidth="1.500" fill="none" />
        </Task>
      </div>
      <div className="ml-auto flex h-[44px] items-center pr-[18px] font-['Open_Sans',sans-serif] text-[11px] leading-[15px] text-[#f4f4f4]">
        <svg width="10" height="6" viewBox="0 0 10 6" fill="none" stroke="#eee" strokeWidth="1.400"><path d="M.5 5.500 5 1l4.500 4.500" /></svg>
        <div className="ml-[13px] w-[34px] text-center tracking-[-0.200px]">POR<br />PTB2</div>
        <svg className="ml-[10px]" width="16" height="16" viewBox="0 0 16 16" fill="none" stroke="#eee">
          <path d="M10 1.500H.5v11h12V8M3.500 15.500h7M7 12.500v3" />
          <path d="M11.500 1.500h3.500v4h-3.500zM13.500 5.500v9" />
        </svg>
        <svg className="ml-[9px]" width="14" height="14" viewBox="0 0 14 14" fill="none" stroke="#eee">
          <path d="M.5 4.500H3L6 1.500v10L3 9H.5z" />
          <circle cx="9" cy="9.500" r="4.500" fill="#f2f2f2" stroke="none" />
          <path d="m7.200 7.700 3.600 3.600M10.800 7.700l-3.600 3.600" stroke="#222" />
        </svg>
        <div className="ml-[10px] w-[62px] whitespace-nowrap text-right tracking-[-0.150px]">17:12<br />23/01/2024</div>
        <svg className="ml-[7px]" width="14" height="15" viewBox="0 0 14 15"><path d="M7 0C4 0 2.200 2.200 2.200 5v4L.5 12h13l-1.700-3V5C11.800 2.200 10 0 7 0zM5 13h4q-.3 1.800-2 1.800T5 13z" fill="#93e4fb" /></svg>
      </div>
      <div className="absolute bottom-[3px] left-0 h-px w-full bg-[#4a4a4a]" />
    </div>
  );
}

function Annotations() {
  return (
    <svg className="pointer-events-none absolute inset-0" width="1782" height="1005" viewBox="0 0 1782 1005">
      <rect x="417.500" y="137.500" width="919" height="37" fill="none" stroke="#f00" strokeWidth="3" />
      <g stroke="#00f" strokeWidth="2.800" fill="#00f" strokeLinecap="round">
        <path d="M264 405 448 179M1244.500 71.500 1201 139M1428 336 1325 178" />
        <g stroke="none">
          <path d="M456.700 168.300 451.500 185 440.500 176z" />
          <path d="M1194 150 1196 135 1206 142z" />
          <path d="M1317.500 166 1331.500 175.500 1321.500 182.500z" />
        </g>
      </g>
    </svg>
  );
}

export default function App() {
  return (
    <div className="relative h-[1005px] w-[1782px] overflow-hidden bg-black">
      <div className="flex h-full border-l-2 border-t border-[#1d1d1d] pt-[6px] font-['Open_Sans',sans-serif]">
        <div className="flex flex-col">
          <DesktopItem icon={<TrashIcon />} lines={["Lixeira"]} />
          <DesktopItem icon={<EdgeIcon />} lines={["Microsoft", "Edge"]} />
          <DesktopItem icon={<WinScpIcon />} lines={["WinSCP"]} />
          <DesktopItem icon={<MenulinkIcon />} lines={["Menulink -", "Operacional"]} />
          <DesktopItem icon={<MenulinkIcon />} lines={["Menulink -", "Cadastros"]} />
          <DesktopItem icon={<HandshakeIcon />} lines={["POS.Concil...", "- Atalho"]} />
          <DesktopItem icon={<CfIcon />} lines={["Aloha", "Configurat..."]} />
          <DesktopItem icon={<ToolboxIcon />} lines={["FM.Applic...", "- Atalho"]} />
          <DesktopItem icon={<ReprintIcon />} lines={["reprintq.exe -", "Atalho"]} />
          <DesktopItem icon={<BatIcon />} lines={["grind.Bat"]} />
          <DesktopItem icon={<ExeIcon />} lines={["FM.Tools.exe", "- Atalho"]} />
          <DesktopItem icon={<ParachuteIcon />} lines={["Ncr.DDash...", "- Atalho"]} />
        </div>
        <DesktopItem icon={<DocIcon />} lines={["Novo", "Documen..."]} />
      </div>

      <div className="absolute left-[1512px] top-0 flex h-[26px] w-[72px] overflow-hidden rounded-b-[4px] bg-white">
        <div className="flex w-[20px] items-center justify-center bg-[#f0f1f6]">
          <svg width="8" height="14" viewBox="0 0 8 14" fill="#7d7f86"><path d="M0 0h2v2H0zM6 0h2v2H6zM0 6h2v2H0zM6 6h2v2H6zM0 12h2v2H0zM6 12h2v2H6z" /></svg>
        </div>
        <svg className="ml-[6px] mt-[6px]" width="14" height="14" viewBox="0 0 14 14" fill="none" stroke="#444">
          <path d="M.5 4.500v-4h4M.5.500l4.500 4.500M9.500.500h4v4M13.500.500 9 5M.5 9.500v4h4M.5 13.500 5 9M13.500 9.500v4h-4M13.500 13.500 9 9" />
        </svg>
        <svg className="ml-[13px] mt-[10px]" width="12" height="7" viewBox="0 0 12 7" fill="none" stroke="#444" strokeWidth="1.400"><path d="M.5.500 6 6 11.500.500" /></svg>
      </div>

      <BackOfficeWindow />

      <svg className="absolute left-[1760px] top-[861px]" width="22" height="49" viewBox="0 0 22 49">
        <path d="M4 0h18v48L2.500 37Q0 35.500 0 33V4Q0 0 4 0z" fill="#6e6e6e" />
        <rect x="3" y="6" width="19" height="18" fill="#0b5b9e" />
        <circle cx="12.500" cy="15" r="7.800" fill="#8d9296" />
        <path d="m5.500 15 4-3.500V14h6v-2.500l4 3.500-4 3.500V16h-6v2.500z" fill="#0b4f8c" />
      </svg>

      <Taskbar />
      <Annotations />
    </div>
  );
}
